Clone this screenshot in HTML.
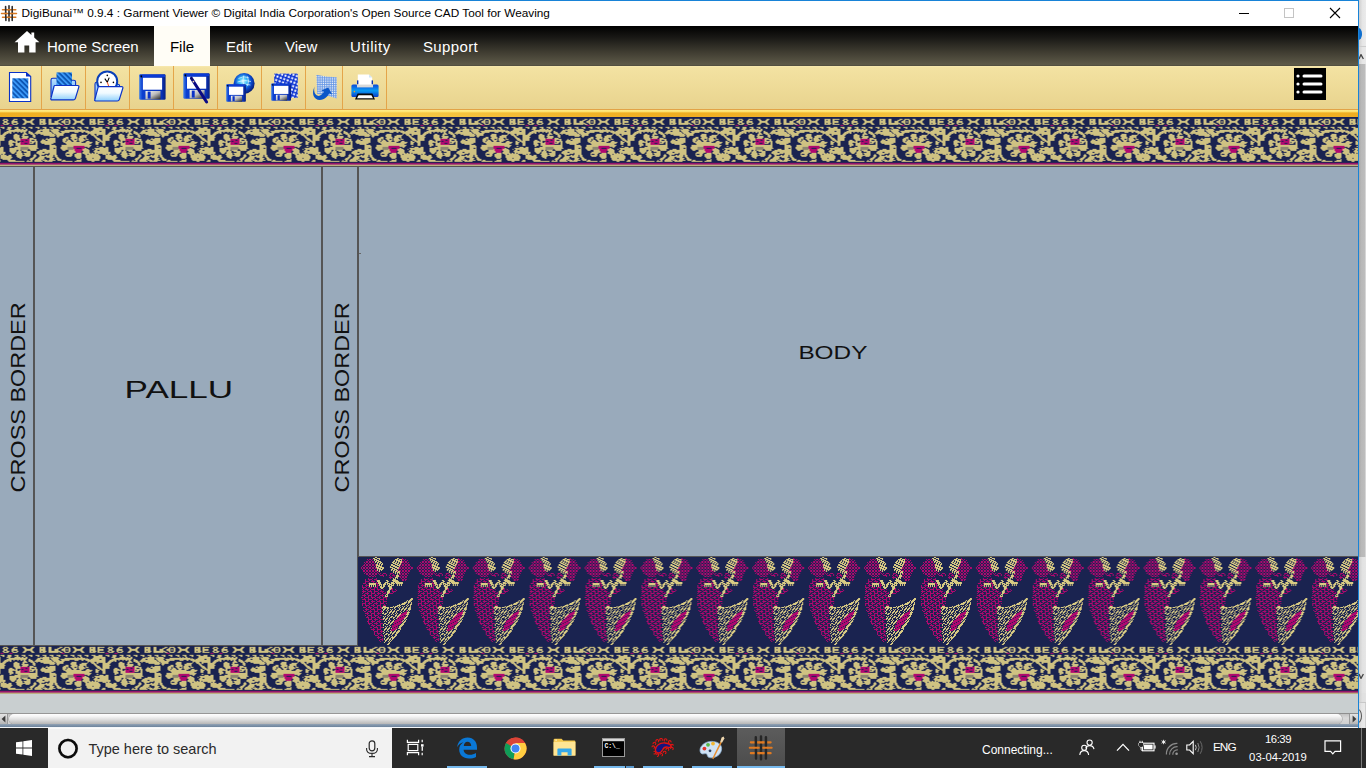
<!DOCTYPE html>
<html lang="en">
<head>
<meta charset="utf-8">
<title>DigiBunai Garment Viewer</title>
<style>
*{box-sizing:border-box;margin:0;padding:0}
html,body{width:1366px;height:768px;overflow:hidden;background:#e4e4e4;font-family:"Liberation Sans",sans-serif}
.abs{position:absolute}
#win{position:absolute;left:0;top:0;width:1358px;height:728px;background:#99aabb;overflow:hidden}
#title{position:absolute;left:0;top:0;width:1358px;height:26px;background:#fff;border-top:1px solid #1883d7}
#title .t{position:absolute;left:21.6px;top:5px;font-size:11.8px;line-height:15px;color:#000;white-space:nowrap;letter-spacing:0px}
#menu{position:absolute;left:0;top:26px;width:1358px;height:40px;background:linear-gradient(#000 0%,#1a1916 30%,#3f3c31 65%,#5d5948 96%,#4e4b3c 100%)}
#menu .mi{position:absolute;top:0;height:40px;line-height:42.6px;color:#fff;font-size:15px;white-space:nowrap}
#menu .sel{background:#fffdf6;color:#000}
#tool{position:absolute;left:0;top:66px;width:1358px;height:44px;background:linear-gradient(#f8e9b0 0%,#f3e2a2 4%,#eedb98 50%,#e8d38e 100%);border-bottom:1px solid #e2a347}
#tool .sep{position:absolute;top:0;width:1px;height:43px;background:#e4a54a}
#band{position:absolute;left:0;top:110px;width:1358px;height:7px;background:linear-gradient(rgba(255,238,140,0.95) 0%,rgba(255,232,120,0.85) 24%,rgba(255,225,110,0) 42%,rgba(255,225,110,0) 100%),linear-gradient(90deg,#efae22 0%,#f0b126 5%,#f9d252 25%,#f0b126 45%,#efae22 50%,#f0b126 55%,#f9d252 75%,#f0b126 95%,#efae22 100%)}
#topb{position:absolute;left:0;top:117px;width:1358px;height:49px}
#botb{position:absolute;left:0;top:645px;width:1358px;height:49px}
#main{position:absolute;left:0;top:166px;width:1358px;height:480px;background:#99aabb;border-top:1px solid #555}
.vl{position:absolute;top:0;width:2px;height:479px;background:#555}
#bodyb{position:absolute;left:358px;top:556px;width:1000px;height:89px}
#under{position:absolute;left:0;top:694px;width:1358px;height:19px;background:#c9cfd0}
#hscroll{position:absolute;left:0;top:713px;width:1358px;height:11px;background:linear-gradient(#c2c2c2,#d9d9d9 40%,#cfcfcf);border-top:1px solid #8f8f8f}
#hscroll .btn{position:absolute;top:0;width:8px;height:10px;background:linear-gradient(#e4e4e4,#d0d0d0 50%,#b4b4b4)}
#hscroll .thumb{position:absolute;left:9px;top:0;width:1333px;height:10px;border-radius:5px;background:linear-gradient(#ffffff 0%,#f4f4f4 25%,#dedede 55%,#b6b6b6 100%);box-shadow:0 0 0 0.6px #a0a0a0}
#wbot{position:absolute;left:0;top:724px;width:1358px;height:3px;background:linear-gradient(#93a3b4,#7a8fa6 60%,#6d849d)}
#wbot2{position:absolute;left:0;top:727px;width:1358px;height:1px;background:#f4f6f8}
#edge{position:absolute;left:1358px;top:0;width:1px;height:728px;background:#1883d7}
#strip{position:absolute;left:1359px;top:0;width:7px;height:728px;overflow:hidden;background:#e4e4e4}
#task{position:absolute;left:0;top:728px;width:1366px;height:40px;background:#292929}
#search{position:absolute;left:48px;top:0;width:344px;height:40px;background:#f2f2f2;border-top:1px solid #fafafa}
#search .st{position:absolute;left:40.4px;top:10px;font-size:14.5px;line-height:20px;color:#2b2b2b;white-space:nowrap}
#task .ul{position:absolute;top:38px;height:2px;background:#76b9ed}
#task .tt{position:absolute;color:#fff;line-height:15px;white-space:nowrap}
</style>
</head>
<body>
<svg width="0" height="0" style="position:absolute"><defs>
<filter id="blur" x="0" y="0" width="100%" height="100%"><feGaussianBlur stdDeviation="0.6"/></filter>
<pattern id="bp" width="105" height="49" patternUnits="userSpaceOnUse" patternTransform="translate(0.5 -0.15)">
<rect width="105" height="49" fill="#1a2350"/>
<path fill="#cfc282" d="M3 2h4v1h-4zM13 2h4v1h-4zM22 2h3v1h-3zM31 2h3v1h-3zM39 2h6v1h-6zM48 2h3v1h-3zM59 2h3v1h-3zM64 2h5v1h-5zM72 2h3v1h-3zM81 2h3v1h-3zM89 2h6v1h-6zM97 2h7v1h-7zM2 3h2v1h-2zM6 3h2v1h-2zM12 3h2v1h-2zM23 3h3v1h-3zM30 3h3v1h-3zM39 3h2v1h-2zM42 3h3v1h-3zM48 3h3v1h-3zM57 3h3v1h-3zM63 3h2v1h-2zM68 3h2v1h-2zM73 3h3v1h-3zM80 3h3v1h-3zM89 3h2v1h-2zM92 3h3v1h-3zM97 3h2v1h-2zM3 4h4v1h-4zM11 4h6v1h-6zM24 4h8v1h-8zM39 4h6v1h-6zM48 4h3v1h-3zM54 4h4v1h-4zM61 4h4v1h-4zM66 4h1v1h-1zM68 4h2v1h-2zM74 4h8v1h-8zM89 4h6v1h-6zM97 4h6v1h-6zM3 5h4v1h-4zM11 5h6v1h-6zM24 5h8v1h-8zM39 5h6v1h-6zM48 5h3v1h-3zM54 5h4v1h-4zM61 5h4v1h-4zM66 5h1v1h-1zM68 5h2v1h-2zM74 5h8v1h-8zM89 5h6v1h-6zM97 5h6v1h-6zM2 6h2v1h-2zM6 6h3v1h-3zM11 6h2v1h-2zM16 6h2v1h-2zM23 6h3v1h-3zM30 6h3v1h-3zM39 6h2v1h-2zM42 6h4v1h-4zM48 6h12v1h-12zM63 6h2v1h-2zM68 6h2v1h-2zM73 6h3v1h-3zM80 6h3v1h-3zM89 6h2v1h-2zM92 6h4v1h-4zM97 6h2v1h-2zM3 7h5v1h-5zM12 7h5v1h-5zM22 7h3v1h-3zM31 7h3v1h-3zM39 7h6v1h-6zM48 7h10v1h-10zM59 7h3v1h-3zM64 7h5v1h-5zM72 7h3v1h-3zM81 7h3v1h-3zM89 7h6v1h-6zM97 7h7v1h-7zM0 10h4v1h-4zM7 10h4v1h-4zM14 10h4v1h-4zM21 10h4v1h-4zM28 10h4v1h-4zM35 10h4v1h-4zM42 10h4v1h-4zM49 10h4v1h-4zM56 10h4v1h-4zM63 10h4v1h-4zM70 10h4v1h-4zM77 10h4v1h-4zM84 10h4v1h-4zM91 10h4v1h-4zM98 10h4v1h-4zM2 11h2v1h-2zM7 11h4v1h-4zM16 11h2v1h-2zM23 11h2v1h-2zM30 11h2v1h-2zM37 11h2v1h-2zM44 11h2v1h-2zM51 11h2v1h-2zM58 11h2v1h-2zM65 11h2v1h-2zM72 11h2v1h-2zM79 11h2v1h-2zM86 11h2v1h-2zM93 11h9v1h-9zM6 12h4v1h-4zM14 12h6v1h-6zM21 12h2v1h-2zM25 12h2v1h-2zM40 12h1v1h-1zM42 12h7v1h-7zM50 12h1v1h-1zM52 12h6v1h-6zM74 12h1v1h-1zM77 12h1v1h-1zM80 12h2v1h-2zM93 12h12v1h-12zM8 13h19v1h-19zM37 13h12v1h-12zM50 13h9v1h-9zM64 13h21v1h-21zM86 13h1v1h-1zM92 13h13v1h-13zM6 14h20v1h-20zM28 14h2v1h-2zM36 14h4v1h-4zM42 14h7v1h-7zM51 14h7v1h-7zM60 14h29v1h-29zM90 14h9v1h-9zM101 14h4v1h-4zM4 15h7v1h-7zM13 15h1v1h-1zM17 15h1v1h-1zM20 15h2v1h-2zM23 15h2v1h-2zM28 15h4v1h-4zM35 15h16v1h-16zM52 15h7v1h-7zM61 15h8v1h-8zM74 15h4v1h-4zM81 15h2v1h-2zM85 15h20v1h-20zM3 16h5v1h-5zM9 16h2v1h-2zM23 16h3v1h-3zM28 16h5v1h-5zM34 16h18v1h-18zM53 16h11v1h-11zM87 16h18v1h-18zM2 17h4v1h-4zM14 17h3v1h-3zM22 17h5v1h-5zM30 17h4v1h-4zM36 17h1v1h-1zM40 17h14v1h-14zM55 17h8v1h-8zM71 17h5v1h-5zM87 17h1v1h-1zM90 17h4v1h-4zM96 17h9v1h-9zM0 18h5v1h-5zM13 18h6v1h-6zM22 18h2v1h-2zM32 18h3v1h-3zM43 18h12v1h-12zM56 18h7v1h-7zM70 18h6v1h-6zM81 18h6v1h-6zM91 18h4v1h-4zM96 18h2v1h-2zM102 18h3v1h-3zM0 19h4v1h-4zM13 19h6v1h-6zM21 19h7v1h-7zM32 19h3v1h-3zM49 19h5v1h-5zM56 19h3v1h-3zM70 19h6v1h-6zM79 19h7v1h-7zM93 19h3v1h-3zM102 19h3v1h-3zM0 20h5v1h-5zM13 20h6v1h-6zM22 20h6v1h-6zM33 20h2v1h-2zM57 20h1v1h-1zM65 20h3v1h-3zM71 20h6v1h-6zM79 20h7v1h-7zM94 20h3v1h-3zM102 20h3v1h-3zM0 21h4v1h-4zM13 21h7v1h-7zM21 21h6v1h-6zM29 21h4v1h-4zM46 21h1v1h-1zM49 21h6v1h-6zM63 21h5v1h-5zM70 21h7v1h-7zM78 21h5v1h-5zM85 21h1v1h-1zM95 21h4v1h-4zM102 21h3v1h-3zM0 22h4v1h-4zM14 22h6v1h-6zM29 22h7v1h-7zM42 22h1v1h-1zM45 22h10v1h-10zM62 22h4v1h-4zM67 22h1v1h-1zM71 22h3v1h-3zM76 22h1v1h-1zM78 22h6v1h-6zM85 22h3v1h-3zM96 22h4v1h-4zM102 22h3v1h-3zM0 23h4v1h-4zM9 23h3v1h-3zM15 23h5v1h-5zM29 23h2v1h-2zM34 23h2v1h-2zM41 23h4v1h-4zM47 23h8v1h-8zM62 23h4v1h-4zM67 23h3v1h-3zM72 23h5v1h-5zM78 23h7v1h-7zM97 23h4v1h-4zM102 23h3v1h-3zM8 24h6v1h-6zM15 24h2v1h-2zM29 24h8v1h-8zM40 24h15v1h-15zM62 24h3v1h-3zM66 24h5v1h-5zM73 24h3v1h-3zM79 24h4v1h-4zM86 24h3v1h-3zM95 24h2v1h-2zM99 24h6v1h-6zM8 25h9v1h-9zM19 25h1v1h-1zM29 25h1v1h-1zM31 25h3v1h-3zM35 25h2v1h-2zM40 25h15v1h-15zM63 25h18v1h-18zM85 25h7v1h-7zM95 25h4v1h-4zM101 25h4v1h-4zM8 26h4v1h-4zM15 26h5v1h-5zM29 26h4v1h-4zM35 26h2v1h-2zM41 26h12v1h-12zM65 26h26v1h-26zM95 26h3v1h-3zM102 26h3v1h-3zM8 27h5v1h-5zM15 27h5v1h-5zM35 27h2v1h-2zM44 27h7v1h-7zM66 27h23v1h-23zM95 27h3v1h-3zM102 27h3v1h-3zM9 28h4v1h-4zM15 28h22v1h-22zM49 28h6v1h-6zM61 28h30v1h-30zM102 28h3v1h-3zM9 29h2v1h-2zM17 29h20v1h-20zM49 29h7v1h-7zM61 29h12v1h-12zM84 29h6v1h-6zM96 29h2v1h-2zM0 30h3v1h-3zM14 30h6v1h-6zM28 30h9v1h-9zM49 30h7v1h-7zM60 30h7v1h-7zM87 30h2v1h-2zM99 30h4v1h-4zM0 31h3v1h-3zM9 31h11v1h-11zM28 31h10v1h-10zM49 31h4v1h-4zM55 31h1v1h-1zM60 31h7v1h-7zM84 31h2v1h-2zM94 31h11v1h-11zM0 32h3v1h-3zM9 32h11v1h-11zM29 32h7v1h-7zM42 32h4v1h-4zM49 32h7v1h-7zM61 32h6v1h-6zM73 32h1v1h-1zM82 32h6v1h-6zM92 32h1v1h-1zM95 32h10v1h-10zM0 33h3v1h-3zM9 33h7v1h-7zM18 33h2v1h-2zM21 33h6v1h-6zM30 33h6v1h-6zM39 33h17v1h-17zM62 33h3v1h-3zM68 33h6v1h-6zM82 33h7v1h-7zM94 33h3v1h-3zM99 33h6v1h-6zM0 34h3v1h-3zM9 34h7v1h-7zM17 34h4v1h-4zM23 34h7v1h-7zM37 34h19v1h-19zM68 34h7v1h-7zM83 34h6v1h-6zM93 34h12v1h-12zM0 35h5v1h-5zM10 35h5v1h-5zM16 35h5v1h-5zM26 35h4v1h-4zM36 35h6v1h-6zM44 35h12v1h-12zM66 35h9v1h-9zM82 35h7v1h-7zM94 35h11v1h-11zM0 36h5v1h-5zM11 36h3v1h-3zM16 36h6v1h-6zM23 36h7v1h-7zM36 36h12v1h-12zM49 36h7v1h-7zM65 36h8v1h-8zM76 36h5v1h-5zM82 36h8v1h-8zM91 36h2v1h-2zM94 36h2v1h-2zM97 36h8v1h-8zM0 37h1v1h-1zM2 37h2v1h-2zM15 37h7v1h-7zM24 37h6v1h-6zM34 37h1v1h-1zM38 37h6v1h-6zM49 37h7v1h-7zM65 37h1v1h-1zM69 37h3v1h-3zM74 37h7v1h-7zM84 37h3v1h-3zM88 37h10v1h-10zM102 37h3v1h-3zM0 38h6v1h-6zM8 38h3v1h-3zM16 38h14v1h-14zM33 38h3v1h-3zM39 38h2v1h-2zM45 38h2v1h-2zM48 38h5v1h-5zM54 38h3v1h-3zM65 38h7v1h-7zM74 38h7v1h-7zM85 38h14v1h-14zM0 39h11v1h-11zM16 39h6v1h-6zM25 39h4v1h-4zM33 39h3v1h-3zM39 39h14v1h-14zM54 39h3v1h-3zM66 39h5v1h-5zM74 39h7v1h-7zM85 39h15v1h-15zM0 40h12v1h-12zM17 40h4v1h-4zM32 40h3v1h-3zM38 40h6v1h-6zM46 40h6v1h-6zM55 40h3v1h-3zM75 40h6v1h-6zM85 40h15v1h-15zM0 41h11v1h-11zM19 41h2v1h-2zM30 41h4v1h-4zM37 41h7v1h-7zM49 41h5v1h-5zM56 41h3v1h-3zM76 41h4v1h-4zM86 41h6v1h-6zM93 41h7v1h-7zM2 42h8v1h-8zM29 42h4v1h-4zM35 42h8v1h-8zM44 42h1v1h-1zM49 42h4v1h-4zM56 42h5v1h-5zM80 42h1v1h-1zM86 42h13v1h-13zM7 43h8v1h-8zM27 43h1v1h-1zM30 43h2v1h-2zM34 43h7v1h-7zM42 43h5v1h-5zM48 43h7v1h-7zM57 43h4v1h-4zM62 43h3v1h-3zM76 43h5v1h-5zM87 43h12v1h-12zM102 43h3v1h-3zM8 44h16v1h-16zM26 44h6v1h-6zM34 44h8v1h-8zM44 44h8v1h-8zM61 44h11v1h-11zM74 44h7v1h-7zM91 44h3v1h-3zM101 44h4v1h-4z"/>
<path fill="#b0086f" d="M0 8h3v1h-3zM9 8h3v1h-3zM61 8h3v1h-3zM20 22h9v1h-9zM20 23h5v1h-5zM27 23h2v1h-2zM20 24h1v1h-1zM23 24h6v1h-6zM20 25h9v1h-9zM20 26h4v1h-4zM27 26h2v1h-2zM20 27h9v1h-9zM73 29h11v1h-11zM73 30h11v1h-11zM73 31h3v1h-3zM81 31h3v1h-3zM74 32h8v1h-8zM74 33h8v1h-8zM75 34h6v1h-6zM75 35h6v1h-6z"/>
<path fill="#8c8770" d="M20 30h8v1h-8zM67 30h6v1h-6zM20 31h8v1h-8zM67 31h6v1h-6zM20 32h8v1h-8zM67 32h6v1h-6z"/>
<rect x="-1" y="46.2" width="107" height="1.55" fill="#b0086f"/><rect x="-1" y="47.75" width="107" height="1.4" fill="#d9c98a"/>
</pattern>

<pattern id="pp" width="56" height="88" patternUnits="userSpaceOnUse" patternTransform="translate(1 0) scale(0.99821 1)">
<rect width="56" height="88" fill="#1a2350"/>
<path fill="#d9cb83" d="M16 0h2v1h-2zM14 1h2v1h-2zM18 1h3v1h-3zM38 1h2v1h-2zM15 2h3v1h-3zM20 2h1v1h-1zM36 2h3v1h-3zM40 2h3v1h-3zM15 3h1v1h-1zM17 3h3v1h-3zM35 3h1v1h-1zM37 3h4v1h-4zM42 3h1v1h-1zM16 4h2v1h-2zM19 4h3v1h-3zM34 4h2v1h-2zM37 4h1v1h-1zM39 4h4v1h-4zM16 5h1v1h-1zM18 5h2v1h-2zM21 5h2v1h-2zM33 5h2v1h-2zM36 5h2v1h-2zM39 5h1v1h-1zM41 5h2v1h-2zM18 6h1v1h-1zM20 6h2v1h-2zM23 6h1v1h-1zM34 6h3v1h-3zM38 6h2v1h-2zM41 6h1v1h-1zM17 7h2v1h-2zM20 7h1v1h-1zM22 7h2v1h-2zM32 7h2v1h-2zM36 7h3v1h-3zM40 7h2v1h-2zM17 8h4v1h-4zM22 8h1v1h-1zM32 8h4v1h-4zM38 8h3v1h-3zM17 9h1v1h-1zM19 9h4v1h-4zM31 9h1v1h-1zM34 9h4v1h-4zM40 9h1v1h-1zM17 10h3v1h-3zM21 10h4v1h-4zM31 10h3v1h-3zM36 10h4v1h-4zM18 11h4v1h-4zM23 11h2v1h-2zM33 11h3v1h-3zM38 11h2v1h-2zM18 12h1v1h-1zM20 12h4v1h-4zM32 12h2v1h-2zM35 12h3v1h-3zM18 13h1v1h-1zM20 13h1v1h-1zM22 13h1v1h-1zM32 13h1v1h-1zM34 13h2v1h-2zM37 13h2v1h-2zM20 14h1v1h-1zM34 14h1v1h-1zM36 14h2v1h-2zM39 14h2v1h-2zM34 15h1v1h-1zM36 15h1v1h-1zM38 15h3v1h-3zM36 16h1v1h-1zM38 16h1v1h-1zM40 16h1v1h-1zM38 17h1v1h-1zM37 18h3v1h-3zM37 19h3v1h-3zM36 20h3v1h-3zM34 21h1v1h-1zM36 21h1v1h-1zM38 21h1v1h-1zM34 22h3v1h-3zM18 23h3v1h-3zM27 23h2v1h-2zM33 23h6v1h-6zM18 24h3v1h-3zM28 24h2v1h-2zM34 24h6v1h-6zM19 25h3v1h-3zM26 25h3v1h-3zM32 25h3v1h-3zM36 25h8v1h-8zM10 26h7v1h-7zM19 26h3v1h-3zM25 26h2v1h-2zM28 26h3v1h-3zM32 26h4v1h-4zM37 26h7v1h-7zM10 27h7v1h-7zM20 27h3v1h-3zM24 27h3v1h-3zM28 27h1v1h-1zM30 27h3v1h-3zM34 27h1v1h-1zM38 27h1v1h-1zM40 27h1v1h-1zM42 27h1v1h-1zM10 28h1v1h-1zM12 28h1v1h-1zM14 28h1v1h-1zM16 28h1v1h-1zM20 28h1v1h-1zM22 28h1v1h-1zM24 28h2v1h-2zM29 28h2v1h-2zM32 28h3v1h-3zM38 28h1v1h-1zM40 28h1v1h-1zM42 28h1v1h-1zM10 29h1v1h-1zM12 29h1v1h-1zM14 29h1v1h-1zM16 29h1v1h-1zM21 29h2v1h-2zM24 29h2v1h-2zM29 29h4v1h-4zM21 30h4v1h-4zM30 30h3v1h-3zM22 31h2v1h-2zM30 31h3v1h-3zM30 32h2v1h-2zM29 33h2v1h-2zM28 34h3v1h-3zM28 35h3v1h-3zM28 36h2v1h-2zM27 37h2v1h-2zM26 38h1v1h-1zM28 38h1v1h-1zM26 39h3v1h-3zM52 41h2v1h-2zM51 42h3v1h-3zM48 43h1v1h-1zM50 43h3v1h-3zM47 44h1v1h-1zM49 44h3v1h-3zM45 45h3v1h-3zM49 45h2v1h-2zM52 45h1v1h-1zM43 46h4v1h-4zM49 46h1v1h-1zM52 46h1v1h-1zM40 47h1v1h-1zM42 47h4v1h-4zM48 47h1v1h-1zM51 47h2v1h-2zM38 48h4v1h-4zM47 48h1v1h-1zM49 48h1v1h-1zM51 48h1v1h-1zM24 49h3v1h-3zM34 49h1v1h-1zM36 49h3v1h-3zM40 49h1v1h-1zM43 49h1v1h-1zM45 49h1v1h-1zM48 49h1v1h-1zM51 49h1v1h-1zM23 50h7v1h-7zM31 50h3v1h-3zM35 50h2v1h-2zM39 50h1v1h-1zM41 50h1v1h-1zM44 50h1v1h-1zM47 50h1v1h-1zM50 50h2v1h-2zM23 51h1v1h-1zM25 51h2v1h-2zM28 51h2v1h-2zM35 51h1v1h-1zM40 51h1v1h-1zM43 51h2v1h-2zM46 51h2v1h-2zM49 51h3v1h-3zM24 52h2v1h-2zM28 52h1v1h-1zM31 52h1v1h-1zM33 52h1v1h-1zM36 52h1v1h-1zM40 52h1v1h-1zM42 52h2v1h-2zM45 52h2v1h-2zM49 52h3v1h-3zM24 53h1v1h-1zM27 53h1v1h-1zM29 53h1v1h-1zM32 53h1v1h-1zM35 53h1v1h-1zM38 53h2v1h-2zM42 53h1v1h-1zM45 53h1v1h-1zM48 53h1v1h-1zM50 53h1v1h-1zM23 54h1v1h-1zM28 54h1v1h-1zM31 54h2v1h-2zM34 54h2v1h-2zM37 54h1v1h-1zM41 54h1v1h-1zM44 54h1v1h-1zM49 54h1v1h-1zM24 55h1v1h-1zM28 55h1v1h-1zM30 55h2v1h-2zM33 55h2v1h-2zM37 55h1v1h-1zM42 55h1v1h-1zM48 55h3v1h-3zM23 56h2v1h-2zM26 56h2v1h-2zM30 56h1v1h-1zM33 56h1v1h-1zM36 56h1v1h-1zM38 56h1v1h-1zM41 56h1v1h-1zM48 56h2v1h-2zM25 57h2v1h-2zM29 57h1v1h-1zM32 57h1v1h-1zM34 57h1v1h-1zM37 57h1v1h-1zM40 57h2v1h-2zM47 57h3v1h-3zM28 58h1v1h-1zM30 58h1v1h-1zM36 58h2v1h-2zM39 58h2v1h-2zM48 58h1v1h-1zM24 59h1v1h-1zM26 59h1v1h-1zM29 59h1v1h-1zM32 59h2v1h-2zM36 59h1v1h-1zM38 59h2v1h-2zM47 59h2v1h-2zM25 60h1v1h-1zM28 60h1v1h-1zM31 60h2v1h-2zM34 60h2v1h-2zM38 60h1v1h-1zM46 60h2v1h-2zM24 61h2v1h-2zM27 61h2v1h-2zM30 61h1v1h-1zM34 61h1v1h-1zM37 61h1v1h-1zM45 61h2v1h-2zM24 62h1v1h-1zM26 62h2v1h-2zM30 62h1v1h-1zM35 62h1v1h-1zM45 62h1v1h-1zM47 62h1v1h-1zM26 63h1v1h-1zM29 63h1v1h-1zM31 63h1v1h-1zM34 63h1v1h-1zM44 63h1v1h-1zM46 63h1v1h-1zM25 64h1v1h-1zM27 64h1v1h-1zM30 64h1v1h-1zM33 64h2v1h-2zM43 64h1v1h-1zM45 64h2v1h-2zM29 65h2v1h-2zM32 65h2v1h-2zM44 65h2v1h-2zM25 66h2v1h-2zM29 66h1v1h-1zM31 66h2v1h-2zM43 66h2v1h-2zM24 67h1v1h-1zM27 67h2v1h-2zM31 67h1v1h-1zM42 67h3v1h-3zM24 68h1v1h-1zM30 68h1v1h-1zM41 68h3v1h-3zM26 69h1v1h-1zM28 69h1v1h-1zM31 69h1v1h-1zM40 69h3v1h-3zM24 70h1v1h-1zM27 70h1v1h-1zM30 70h1v1h-1zM40 70h2v1h-2zM26 71h2v1h-2zM29 71h2v1h-2zM32 71h1v1h-1zM39 71h3v1h-3zM25 72h2v1h-2zM28 72h2v1h-2zM37 72h1v1h-1zM41 72h1v1h-1zM25 73h1v1h-1zM28 73h1v1h-1zM31 73h1v1h-1zM36 73h1v1h-1zM39 73h2v1h-2zM24 74h1v1h-1zM27 74h1v1h-1zM29 74h1v1h-1zM32 74h1v1h-1zM35 74h2v1h-2zM38 74h3v1h-3zM25 75h1v1h-1zM31 75h2v1h-2zM34 75h2v1h-2zM37 75h3v1h-3zM24 76h1v1h-1zM27 76h2v1h-2zM31 76h1v1h-1zM33 76h2v1h-2zM37 76h2v1h-2zM26 77h2v1h-2zM29 77h2v1h-2zM33 77h1v1h-1zM36 77h2v1h-2zM25 78h1v1h-1zM29 78h1v1h-1zM32 78h1v1h-1zM36 78h2v1h-2zM25 79h1v1h-1zM30 79h1v1h-1zM33 79h1v1h-1zM35 79h2v1h-2zM26 80h1v1h-1zM29 80h1v1h-1zM32 80h4v1h-4zM25 81h1v1h-1zM28 81h2v1h-2zM31 81h1v1h-1zM33 81h2v1h-2zM25 82h1v1h-1zM27 82h2v1h-2zM30 82h2v1h-2zM33 82h1v1h-1zM26 83h2v1h-2zM30 83h1v1h-1zM32 83h1v1h-1zM26 84h1v1h-1zM29 84h1v1h-1zM31 84h1v1h-1zM25 85h1v1h-1zM30 85h1v1h-1zM29 86h2v1h-2zM28 87h2v1h-2z"/>
<path fill="#b0086f" d="M43 1h1v1h-1zM8 2h1v1h-1zM10 2h2v1h-2zM13 2h1v1h-1zM43 2h2v1h-2zM46 2h1v1h-1zM9 3h1v1h-1zM12 3h1v1h-1zM45 3h1v1h-1zM48 3h1v1h-1zM7 4h2v1h-2zM10 4h2v1h-2zM13 4h2v1h-2zM43 4h2v1h-2zM46 4h2v1h-2zM5 5h1v1h-1zM7 5h2v1h-2zM10 5h2v1h-2zM13 5h2v1h-2zM43 5h2v1h-2zM46 5h2v1h-2zM49 5h1v1h-1zM6 6h1v1h-1zM9 6h1v1h-1zM12 6h1v1h-1zM15 6h1v1h-1zM42 6h1v1h-1zM45 6h1v1h-1zM48 6h1v1h-1zM5 7h1v1h-1zM7 7h2v1h-2zM10 7h2v1h-2zM13 7h2v1h-2zM16 7h1v1h-1zM43 7h2v1h-2zM46 7h2v1h-2zM49 7h2v1h-2zM4 8h2v1h-2zM7 8h2v1h-2zM10 8h2v1h-2zM13 8h2v1h-2zM16 8h1v1h-1zM41 8h1v1h-1zM43 8h2v1h-2zM46 8h2v1h-2zM49 8h2v1h-2zM3 9h1v1h-1zM6 9h1v1h-1zM9 9h1v1h-1zM12 9h1v1h-1zM15 9h1v1h-1zM42 9h1v1h-1zM45 9h1v1h-1zM48 9h1v1h-1zM51 9h1v1h-1zM2 10h1v1h-1zM4 10h2v1h-2zM7 10h2v1h-2zM10 10h2v1h-2zM13 10h2v1h-2zM16 10h1v1h-1zM40 10h2v1h-2zM43 10h2v1h-2zM46 10h2v1h-2zM49 10h2v1h-2zM52 10h2v1h-2zM2 11h1v1h-1zM4 11h2v1h-2zM7 11h2v1h-2zM10 11h2v1h-2zM13 11h2v1h-2zM16 11h2v1h-2zM40 11h2v1h-2zM43 11h2v1h-2zM46 11h2v1h-2zM49 11h2v1h-2zM52 11h2v1h-2zM3 12h1v1h-1zM6 12h1v1h-1zM9 12h1v1h-1zM12 12h1v1h-1zM15 12h1v1h-1zM39 12h1v1h-1zM42 12h1v1h-1zM45 12h1v1h-1zM48 12h1v1h-1zM51 12h1v1h-1zM4 13h2v1h-2zM7 13h2v1h-2zM10 13h2v1h-2zM13 13h2v1h-2zM16 13h2v1h-2zM40 13h2v1h-2zM43 13h2v1h-2zM46 13h2v1h-2zM49 13h2v1h-2zM4 14h2v1h-2zM7 14h2v1h-2zM10 14h2v1h-2zM13 14h2v1h-2zM16 14h2v1h-2zM19 14h1v1h-1zM38 14h1v1h-1zM41 14h1v1h-1zM43 14h2v1h-2zM46 14h2v1h-2zM49 14h2v1h-2zM6 15h1v1h-1zM9 15h1v1h-1zM12 15h1v1h-1zM15 15h1v1h-1zM18 15h1v1h-1zM42 15h1v1h-1zM45 15h1v1h-1zM48 15h1v1h-1zM5 16h1v1h-1zM7 16h2v1h-2zM10 16h2v1h-2zM13 16h2v1h-2zM16 16h2v1h-2zM19 16h1v1h-1zM21 16h1v1h-1zM24 16h3v1h-3zM31 16h3v1h-3zM41 16h1v1h-1zM43 16h2v1h-2zM46 16h2v1h-2zM49 16h1v1h-1zM7 17h2v1h-2zM10 17h2v1h-2zM13 17h2v1h-2zM16 17h2v1h-2zM20 17h1v1h-1zM23 17h1v1h-1zM27 17h1v1h-1zM31 17h1v1h-1zM34 17h1v1h-1zM40 17h2v1h-2zM43 17h2v1h-2zM46 17h2v1h-2zM9 18h1v1h-1zM12 18h1v1h-1zM15 18h1v1h-1zM21 18h4v1h-4zM27 18h1v1h-1zM30 18h1v1h-1zM33 18h3v1h-3zM42 18h1v1h-1zM45 18h1v1h-1zM48 18h1v1h-1zM10 19h2v1h-2zM13 19h2v1h-2zM16 19h1v1h-1zM24 19h1v1h-1zM31 19h1v1h-1zM35 19h1v1h-1zM40 19h2v1h-2zM43 19h2v1h-2zM46 19h2v1h-2zM30 20h4v1h-4zM41 20h1v1h-1zM43 20h2v1h-2zM46 20h2v1h-2zM9 21h1v1h-1zM13 21h1v1h-1zM17 21h1v1h-1zM31 21h1v1h-1zM42 21h1v1h-1zM45 21h1v1h-1zM6 22h1v1h-1zM9 22h4v1h-4zM15 22h3v1h-3zM43 22h2v1h-2zM46 22h2v1h-2zM6 23h1v1h-1zM10 23h1v1h-1zM13 23h1v1h-1zM17 23h1v1h-1zM43 23h2v1h-2zM46 23h1v1h-1zM6 24h4v1h-4zM12 24h4v1h-4zM6 25h1v1h-1zM10 25h1v1h-1zM14 25h1v1h-1zM17 25h1v1h-1zM4 26h3v1h-3zM9 26h1v1h-1zM17 26h2v1h-2zM7 27h1v1h-1zM18 27h1v1h-1zM3 28h1v1h-1zM6 28h4v1h-4zM18 28h2v1h-2zM3 29h1v1h-1zM7 29h1v1h-1zM18 29h1v1h-1zM3 30h4v1h-4zM9 30h4v1h-4zM15 30h4v1h-4zM4 31h1v1h-1zM7 31h1v1h-1zM11 31h1v1h-1zM15 31h1v1h-1zM18 31h1v1h-1zM33 31h1v1h-1zM3 32h1v1h-1zM6 32h4v1h-4zM12 32h4v1h-4zM18 32h4v1h-4zM24 32h1v1h-1zM32 32h2v1h-2zM36 32h1v1h-1zM4 33h1v1h-1zM8 33h1v1h-1zM11 33h1v1h-1zM15 33h1v1h-1zM19 33h1v1h-1zM22 33h1v1h-1zM33 33h1v1h-1zM37 33h1v1h-1zM3 34h4v1h-4zM9 34h4v1h-4zM15 34h4v1h-4zM21 34h4v1h-4zM33 34h4v1h-4zM4 35h1v1h-1zM8 35h1v1h-1zM12 35h1v1h-1zM15 35h1v1h-1zM19 35h1v1h-1zM23 35h1v1h-1zM26 35h1v1h-1zM34 35h1v1h-1zM3 36h1v1h-1zM6 36h4v1h-4zM12 36h4v1h-4zM18 36h4v1h-4zM24 36h3v1h-3zM30 36h4v1h-4zM5 37h1v1h-1zM8 37h1v1h-1zM12 37h1v1h-1zM16 37h1v1h-1zM19 37h1v1h-1zM23 37h1v1h-1zM3 38h4v1h-4zM9 38h4v1h-4zM15 38h4v1h-4zM21 38h4v1h-4zM5 39h1v1h-1zM9 39h1v1h-1zM12 39h1v1h-1zM16 39h1v1h-1zM20 39h1v1h-1zM23 39h1v1h-1zM2 40h2v1h-2zM6 40h4v1h-4zM12 40h4v1h-4zM18 40h4v1h-4zM24 40h4v1h-4zM5 41h1v1h-1zM9 41h1v1h-1zM13 41h1v1h-1zM16 41h1v1h-1zM20 41h1v1h-1zM24 41h1v1h-1zM27 41h1v1h-1zM3 42h4v1h-4zM9 42h4v1h-4zM15 42h4v1h-4zM21 42h4v1h-4zM27 42h1v1h-1zM6 43h1v1h-1zM9 43h1v1h-1zM13 43h1v1h-1zM17 43h1v1h-1zM20 43h1v1h-1zM24 43h1v1h-1zM3 44h1v1h-1zM6 44h4v1h-4zM12 44h4v1h-4zM18 44h4v1h-4zM24 44h4v1h-4zM6 45h1v1h-1zM10 45h1v1h-1zM13 45h1v1h-1zM17 45h1v1h-1zM21 45h1v1h-1zM24 45h1v1h-1zM3 46h4v1h-4zM9 46h4v1h-4zM15 46h4v1h-4zM21 46h4v1h-4zM27 46h1v1h-1zM3 47h1v1h-1zM6 47h1v1h-1zM10 47h1v1h-1zM14 47h1v1h-1zM17 47h1v1h-1zM21 47h1v1h-1zM25 47h1v1h-1zM3 48h1v1h-1zM6 48h4v1h-4zM12 48h4v1h-4zM18 48h4v1h-4zM24 48h3v1h-3zM7 49h1v1h-1zM10 49h1v1h-1zM14 49h1v1h-1zM18 49h1v1h-1zM21 49h1v1h-1zM4 50h3v1h-3zM9 50h4v1h-4zM15 50h4v1h-4zM21 50h2v1h-2zM7 51h1v1h-1zM11 51h1v1h-1zM14 51h1v1h-1zM18 51h1v1h-1zM22 51h1v1h-1zM6 52h4v1h-4zM12 52h4v1h-4zM18 52h4v1h-4zM4 53h1v1h-1zM7 53h1v1h-1zM11 53h1v1h-1zM15 53h1v1h-1zM18 53h1v1h-1zM22 53h1v1h-1zM47 53h1v1h-1zM5 54h2v1h-2zM9 54h4v1h-4zM15 54h4v1h-4zM21 54h2v1h-2zM47 54h1v1h-1zM8 55h1v1h-1zM11 55h1v1h-1zM15 55h1v1h-1zM19 55h1v1h-1zM22 55h1v1h-1zM45 55h3v1h-3zM6 56h4v1h-4zM12 56h4v1h-4zM18 56h4v1h-4zM43 56h5v1h-5zM8 57h1v1h-1zM12 57h1v1h-1zM15 57h1v1h-1zM19 57h1v1h-1zM42 57h5v1h-5zM6 58h1v1h-1zM9 58h4v1h-4zM15 58h4v1h-4zM21 58h2v1h-2zM41 58h4v1h-4zM46 58h1v1h-1zM8 59h1v1h-1zM12 59h1v1h-1zM16 59h1v1h-1zM19 59h1v1h-1zM40 59h3v1h-3zM44 59h2v1h-2zM7 60h3v1h-3zM12 60h4v1h-4zM18 60h4v1h-4zM39 60h2v1h-2zM42 60h4v1h-4zM9 61h1v1h-1zM12 61h1v1h-1zM16 61h1v1h-1zM20 61h1v1h-1zM38 61h1v1h-1zM40 61h5v1h-5zM9 62h4v1h-4zM15 62h4v1h-4zM21 62h3v1h-3zM38 62h6v1h-6zM9 63h1v1h-1zM13 63h1v1h-1zM16 63h1v1h-1zM20 63h1v1h-1zM36 63h6v1h-6zM43 63h1v1h-1zM8 64h2v1h-2zM12 64h4v1h-4zM18 64h4v1h-4zM35 64h5v1h-5zM41 64h2v1h-2zM9 65h1v1h-1zM13 65h1v1h-1zM17 65h1v1h-1zM20 65h1v1h-1zM35 65h3v1h-3zM39 65h4v1h-4zM9 66h4v1h-4zM15 66h4v1h-4zM21 66h3v1h-3zM34 66h2v1h-2zM37 66h5v1h-5zM10 67h1v1h-1zM13 67h1v1h-1zM17 67h1v1h-1zM21 67h1v1h-1zM35 67h6v1h-6zM12 68h4v1h-4zM18 68h4v1h-4zM33 68h6v1h-6zM14 69h1v1h-1zM17 69h1v1h-1zM21 69h1v1h-1zM33 69h4v1h-4zM38 69h1v1h-1zM11 70h2v1h-2zM15 70h4v1h-4zM21 70h3v1h-3zM33 70h2v1h-2zM36 70h3v1h-3zM14 71h1v1h-1zM18 71h1v1h-1zM21 71h1v1h-1zM34 71h4v1h-4zM12 72h4v1h-4zM18 72h4v1h-4zM32 72h5v1h-5zM14 73h1v1h-1zM18 73h1v1h-1zM22 73h1v1h-1zM32 73h3v1h-3zM15 74h4v1h-4zM21 74h3v1h-3zM15 75h1v1h-1zM18 75h1v1h-1zM22 75h1v1h-1zM15 76h1v1h-1zM18 76h4v1h-4zM15 77h1v1h-1zM19 77h1v1h-1zM22 77h1v1h-1zM16 78h3v1h-3zM21 78h3v1h-3zM19 79h1v1h-1zM23 79h1v1h-1zM18 80h4v1h-4zM19 81h1v1h-1zM23 81h1v1h-1zM21 82h3v1h-3zM20 83h1v1h-1zM23 83h1v1h-1zM21 84h1v1h-1z"/>
</pattern>
</defs></svg>
<div id="win">
  <div id="title">
<svg class="abs" style="left:0;top:3px" width="20" height="20" viewBox="0 0 20 20">
<g stroke="#d97a22" stroke-width="1.5" stroke-linecap="round"><path d="M2.5 5.8H15.8M1.5 9.5H16.5M2.5 13.2H15.8"/></g>
<g stroke="#2e2e2e" stroke-width="1.6" stroke-linecap="round"><path d="M5.6 2.5L5.9 16.5M9 1.8L9 17M12.2 2.5L12.2 16.5"/></g>
<g stroke="#d97a22" stroke-width="1.5"><path d="M7.6 5.8h2.8M4.2 9.5h2.8M10.8 9.5h2.8M7.6 13.2h2.8"/></g>
</svg>
<svg class="abs" style="left:1230px;top:0" width="128" height="25" viewBox="0 0 128 25">
<path d="M9 12.5H19" stroke="#000" stroke-width="1"/>
<rect x="54.5" y="7.5" width="9" height="9" fill="none" stroke="#c4c4c4" stroke-width="1"/>
<path d="M100 7L110 17M110 7L100 17" stroke="#000" stroke-width="1.1"/>
</svg>
<span class="t">DigiBunai™ 0.9.4 : Garment Viewer © Digital India Corporation's Open Source CAD Tool for Weaving</span></div>
  <div id="menu">
    <svg class="abs" style="left:14px;top:4px" width="26" height="24" viewBox="0 0 26 24"><path d="M13 1L0.6 12.2H4V22.6H10.4V15.4H15.2V22.6H21.6V12.2H25.4L20.2 7.4V2.6H17.4V4.9Z" fill="#fff"/></svg>
    <span class="mi" style="left:47px">Home Screen</span>
    <span class="mi sel" style="left:154px;width:56px;text-align:center">File</span>
    <span class="mi" style="left:226px">Edit</span>
    <span class="mi" style="left:285px">View</span>
    <span class="mi" style="left:350px;letter-spacing:0.6px">Utility</span>
    <span class="mi" style="left:423px;letter-spacing:0.36px">Support</span>
  </div>
  <div id="tool">
<div class="sep" style="left:41px"></div><div class="sep" style="left:85px"></div><div class="sep" style="left:129px"></div><div class="sep" style="left:173px"></div><div class="sep" style="left:217px"></div><div class="sep" style="left:261px"></div><div class="sep" style="left:305px"></div><div class="sep" style="left:342px"></div><div class="sep" style="left:386px"></div>
<svg class="abs" style="left:0;top:0" width="400" height="44" viewBox="0 0 400 44">
<defs>
<pattern id="fab" width="3.6" height="3.6" patternUnits="userSpaceOnUse" patternTransform="rotate(-45)"><rect width="3.6" height="3.6" fill="#3b98f6"/><rect width="1.8" height="3.6" fill="#0d56b4"/></pattern>
<pattern id="chk" width="3.6" height="3.6" patternUnits="userSpaceOnUse" patternTransform="rotate(20)"><rect width="3.6" height="3.6" fill="#0a32d2"/><rect x="0.5" y="0.5" width="2.1" height="2" fill="#fff"/></pattern>
<pattern id="grd" width="1.8" height="1.8" patternUnits="userSpaceOnUse"><rect width="1.8" height="1.8" fill="#fff"/><path d="M0 0.45H1.8M0.45 0V1.8" stroke="#5a90ec" stroke-width="0.8"/></pattern>
<linearGradient id="fl" x1="0" x2="1" y1="0" y2="0"><stop offset="0" stop-color="#3f7fe6"/><stop offset="0.12" stop-color="#0c3fd0"/><stop offset="0.85" stop-color="#0a32b8"/><stop offset="1" stop-color="#08207e"/></linearGradient>
<linearGradient id="sh" x1="0" x2="1" y1="0" y2="1"><stop offset="0" stop-color="#f4f4f4"/><stop offset="0.5" stop-color="#bdbdbd"/><stop offset="1" stop-color="#2a2a2a"/></linearGradient>
<linearGradient id="fo" x1="0" x2="0" y1="0" y2="1"><stop offset="0" stop-color="#ffffff"/><stop offset="0.45" stop-color="#f0faff"/><stop offset="1" stop-color="#8fd0fb"/></linearGradient>
<linearGradient id="fb" x1="0" x2="0" y1="0" y2="1"><stop offset="0" stop-color="#b9e0ff"/><stop offset="1" stop-color="#5aa8f0"/></linearGradient>
<radialGradient id="gl" cx="0.45" cy="0.4" r="0.6"><stop offset="0" stop-color="#d8f8ff"/><stop offset="0.3" stop-color="#3cc0f8"/><stop offset="0.65" stop-color="#0a4bd0"/><stop offset="1" stop-color="#061a70"/></radialGradient>
<linearGradient id="pr" x1="0" x2="0" y1="0" y2="1"><stop offset="0" stop-color="#0a46d8"/><stop offset="0.5" stop-color="#0a9cf4"/><stop offset="1" stop-color="#0a3cc8"/></linearGradient>
<g id="floppy">
<rect x="0" y="0" width="26.4" height="25.6" rx="1.2" fill="url(#fl)"/>
<rect x="0.6" y="0.5" width="25.2" height="2.4" fill="#0a3ad4"/>
<rect x="3.7" y="3.6" width="19.2" height="11.9" fill="#fff"/>
<rect x="1.4" y="1.2" width="1.5" height="2" fill="#000"/>
<rect x="6.3" y="16.8" width="15" height="8.3" fill="url(#sh)"/>
<rect x="8.5" y="17.4" width="2.9" height="7" fill="#0a32c8"/>
</g>
<g id="folder">
<path d="M1 20.5V3.6Q1 1.8 2.8 1.8H6.6L8.2 3.8H23.8Q25.6 3.8 25.6 5.6V9" fill="url(#fb)" stroke="#0a32c8" stroke-width="1.1"/>
</g>
<g id="folderfront">
<path d="M4.8 8.8H27.6Q29.3 8.8 28.8 10.4L25.4 21.6Q24.9 23.2 23.2 23.2H2.2Q0.4 23.2 0.9 21.6L4 9.8Q4.2 8.8 4.8 8.8Z" fill="url(#fo)" stroke="#0a32c8" stroke-width="1.2"/>
</g>
</defs>
<!-- 1 new -->
<path d="M9.5 6.5H26.3L30.7 10.6V35.5H9.5Z" fill="#fff" stroke="#0a32c8" stroke-width="1.1"/>
<path d="M26 6.2L31 10.6H26Z" fill="#0a32c8"/>
<rect x="12.3" y="12.3" width="16" height="20" fill="url(#fab)"/>
<!-- 2 open -->
<g transform="translate(50 10.5)"><use href="#folder"/></g>
<rect x="56.5" y="6.4" width="15.5" height="13" fill="url(#fab)"/>
<g transform="translate(50 10.7)"><use href="#folderfront"/></g>
<!-- 3 recent -->
<g transform="translate(94 14.4)"><use href="#folder"/></g>
<circle cx="107.2" cy="15.4" r="10" fill="#fff" stroke="#0a40b8" stroke-width="2"/>
<g fill="#000"><circle cx="107.3" cy="9.4" r="0.8"/><circle cx="101" cy="16.4" r="0.8"/><circle cx="113.4" cy="16.4" r="0.8"/></g>
<path d="M104.8 12.6L107.3 16.2L109.2 11.6" stroke="#000" stroke-width="1.1" fill="none"/><path d="M107.3 16.2L108.6 20" stroke="#f0501e" stroke-width="1"/>
<g transform="translate(94 11.8)"><use href="#folderfront"/></g>
<!-- 4 save -->
<g transform="translate(139.2 8.2)"><use href="#floppy"/></g>
<!-- 5 save as -->
<g transform="translate(183.3 7.2)"><use href="#floppy"/></g>
<path d="M191.4 12.2L206.6 36" stroke="#0a0a86" stroke-width="3" stroke-linecap="round"/><path d="M191 11.6L192.6 14.2" stroke="#101060" stroke-width="1.6"/><circle cx="193.4" cy="15.6" r="0.9" fill="#f6d9b0"/>
<!-- 6 save web -->
<circle cx="244.1" cy="17.4" r="10.5" fill="url(#gl)"/>
<g fill="none" stroke="#e8fbff" stroke-width="0.9" opacity="0.75"><path d="M238.5 12.5Q243 9.5 248.5 11.5M237.5 16Q244 13 251 15.5M239 19.5Q245 17 250.5 19M243.8 9.5Q241.5 15 244.5 21M247.5 10.5Q249.5 15 247.5 20"/></g>
<g transform="translate(226.2 18.2) scale(0.745 0.69)"><use href="#floppy"/></g>
<!-- 7 save texture -->
<rect x="274.2" y="7.6" width="23.6" height="24.2" fill="url(#chk)"/>
<g transform="translate(271.2 17.4) scale(0.75 0.68)"><use href="#floppy"/></g>
<!-- 8 export -->
<path d="M316.4 8.8L326 10.4L336.8 11.2L336.8 32.4L327 29.6L317.2 28Z" fill="url(#grd)" opacity="0.92"/>
<path d="M314.6 20.6C311 28 314 34 319.6 34C325 33.6 328 30 329.2 27.2L332.2 28.6L328.2 21.6L321.2 24.4L324 25.6C322.4 28.8 319.6 30.6 317.2 29.6C314.4 28.4 313.6 24.4 314.6 20.6Z" fill="#0a56c8"/>
<!-- 9 print -->
<path d="M357.8 19V8.4H369L372.2 11.4V19Z" fill="#fff"/><path d="M369 8.4L372.2 11.4H369Z" fill="#cfe4f8"/>
<rect x="357" y="14.4" width="1.4" height="4" fill="#0a32b0"/><rect x="371.6" y="14.4" width="1.4" height="4" fill="#0a32b0"/>
<path d="M353 18.4H356.6L357.4 20.4H372.6L373.4 18.4H377Q378.6 18.4 378.6 20V29.4Q378.6 31 377 31H353Q351.4 31 351.4 29.4V20Q351.4 18.4 353 18.4Z" fill="url(#pr)"/>
<path d="M357 18.6H373V21.4H357Z" fill="#d8d8d8"/>
<circle cx="354.4" cy="25.6" r="0.8" fill="#f8a020"/>
<path d="M357.6 27.6H372.4L375 33.4H355Z" fill="#0a0a0a"/><path d="M358.6 29.2H371.4L373 32.2H357Z" fill="#fff"/>
</svg>

<svg class="abs" style="left:1294px;top:2px" width="32" height="32" viewBox="0 0 32 32"><rect width="32" height="32" fill="#000"/>
<g stroke="#fff" stroke-width="3" stroke-linecap="round"><path d="M10 8H27M10 16H27M10 24H27"/></g>
<circle cx="4" cy="8" r="1.6" fill="#fff"/><circle cx="4" cy="16" r="1.6" fill="#fff"/><circle cx="4" cy="24" r="1.6" fill="#fff"/></svg>
</div>
  <div id="band"></div>
  <svg id="topb" width="1358" height="49"><rect width="1358" height="49" fill="url(#bp)"/></svg>
  <div id="main">
    <div class="vl" style="left:33px"></div>
    <div class="vl" style="left:321px"></div>
    <div class="vl" style="left:357px"></div>
    <div class="abs" style="left:359px;top:86px;width:2px;height:1px;background:#666"></div>
    <svg class="abs" style="left:0;top:0" width="1358" height="479" viewBox="0 166 1358 479" font-family="Liberation Sans, sans-serif" fill="#111">
      <text transform="translate(24.5 491.4) rotate(-90)" font-size="19.5" textLength="190" lengthAdjust="spacingAndGlyphs">CROSS BORDER</text>
      <text transform="translate(348.6 491.4) rotate(-90)" font-size="19.5" textLength="190" lengthAdjust="spacingAndGlyphs">CROSS BORDER</text>
      <text x="124.6" y="397.2" font-size="24.4" textLength="108.6" lengthAdjust="spacingAndGlyphs">PALLU</text>
      <text x="798.4" y="358" font-size="18.6" textLength="69" lengthAdjust="spacingAndGlyphs">BODY</text>
    </svg>
  </div>
  <svg id="bodyb" width="1000" height="89" viewBox="0 -1 1000 89"><rect y="-1" width="1000" height="1" fill="#555"/><rect width="1000" height="88" fill="url(#pp)"/></svg>
  <svg id="botb" width="1358" height="49" viewBox="0 0 1358 49"><rect width="1358" height="49" fill="url(#bp)"/></svg>
  <div class="abs" style="left:0;top:645px;width:358px;height:1px;background:#555"></div>
  <div id="under"></div>
  <div id="hscroll"><div class="btn" style="left:0;border-right:1px solid #9a9a9a"><svg class="abs" style="left:1px;top:1px" width="5" height="8" viewBox="0 0 5 8"><path d="M4.4 0.4L0.6 4L4.4 7.6Z" fill="#3c3c3c"/></svg></div><div class="thumb"></div><div class="btn" style="left:1349px;width:9px;border-left:1px solid #9a9a9a"><svg class="abs" style="left:2px;top:1px" width="5" height="8" viewBox="0 0 5 8"><path d="M0.6 0.4L4.4 4L0.6 7.6Z" fill="#3c3c3c"/></svg></div></div>
  <div id="wbot"></div><div id="wbot2"></div>
</div>
<div id="strip">
<div class="abs" style="left:0;top:0;width:7px;height:46px;background:linear-gradient(90deg,#cfcfcf,#e6e6e6 50%,#ebebeb)"></div>
<div class="abs" style="left:-4px;top:28px;width:7.4px;height:12px;border-radius:50%;background:#0f6fcf"></div>
<div class="abs" style="left:0;top:46px;width:7px;height:1px;background:#cdcdcd"></div>
<div class="abs" style="left:0;top:47px;width:7px;height:17px;background:linear-gradient(90deg,#d2d2d2,#e6e6e6 50%,#e9e9e9)"></div>
<svg class="abs" style="left:0;top:54px" width="5" height="6" viewBox="0 0 5 6"><path d="M0 5L2 0.6L4.4 5" fill="none" stroke="#444" stroke-width="1.3"/></svg>
<div class="abs" style="left:0;top:64px;width:6px;height:493px;background:linear-gradient(90deg,#a9a9a9,#b8b8b8 40%,#bdbdbd)"></div>
<div class="abs" style="left:6px;top:64px;width:1px;height:493px;background:#d6d6d6"></div>
<div class="abs" style="left:0;top:557px;width:7px;height:136px;background:linear-gradient(90deg,#cfcfcf,#e2e2e2 50%,#e6e6e6)"></div>
<svg class="abs" style="left:0;top:673px" width="5" height="6" viewBox="0 0 5 6"><path d="M0 1L2 5.4L4.4 1" fill="none" stroke="#444" stroke-width="1.3"/></svg>
<div class="abs" style="left:0;top:693px;width:7px;height:9px;background:linear-gradient(90deg,#cfcfcf,#e0e0e0 50%,#e2e2e2)"></div>
<div class="abs" style="left:0;top:702px;width:7px;height:1px;background:#c8c8c8"></div>
<div class="abs" style="left:0;top:703px;width:7px;height:25px;background:linear-gradient(90deg,#d6d6d6,#e6e6e6 40%,#e9e9e9 80%,#d0d0d0 90%)"></div>
<div class="abs" style="left:-5px;top:709px;width:8px;height:14px;border-radius:50%;border:1px solid #555"></div>
</div>
<div id="edge"></div>
<div id="task">
<svg class="abs" style="left:16px;top:12px" width="16" height="16" viewBox="0 0 16 16"><path d="M0 2.3L6.5 1.4V7.6H0ZM7.3 1.3L16 0V7.6H7.3ZM0 8.4H6.5V14.6L0 13.7ZM7.3 8.4H16V16L7.3 14.7Z" fill="#fff"/></svg>
<div id="search"><svg class="abs" style="left:8px;top:8px" width="24" height="24" viewBox="0 0 24 24"><circle cx="12" cy="11.6" r="9.6" fill="none" stroke="#b9b9b9" stroke-width="1.2"/><circle cx="12" cy="11.6" r="8.6" fill="none" stroke="#0c0c0c" stroke-width="2.6"/></svg>
<span class="st">Type here to search</span>
<svg class="abs" style="left:317px;top:11px" width="14" height="18" viewBox="0 0 14 18"><rect x="4.2" y="0.8" width="5.6" height="10" rx="2.8" fill="none" stroke="#2a2a2a" stroke-width="1.2"/><path d="M1.6 8V9.2Q1.6 13.4 7 13.4Q12.4 13.4 12.4 9.2V8M7 13.4V16.4M4 16.6H10" fill="none" stroke="#2a2a2a" stroke-width="1.1"/></svg>
</div>
<!-- task view -->
<svg class="abs" style="left:406px;top:11px" width="20" height="17" viewBox="0 0 20 17"><g fill="none" stroke="#fff" stroke-width="1.2"><path d="M1.4 0.8V3.4H12.6V0.8M1.4 16.2V13.6H12.6V16.2"/><rect x="2.2" y="5.4" width="9.6" height="6.2"/><path d="M16.2 0.8V3.2M16.2 13.8V16.2"/></g><rect x="15" y="5.2" width="2.6" height="2.4" fill="#fff"/><rect x="15.6" y="7.6" width="1.3" height="4.2" fill="#fff"/></svg>
<!-- edge -->
<svg class="abs" style="left:456px;top:9px" width="22" height="22" viewBox="0 0 22 22"><path d="M1.2 10.2C1.8 4.6 6 0.6 11.6 0.6C17.6 0.6 21 5 21 10.4V12.8H7.6C7.8 16.2 10.6 17.8 13.8 17.8C16.2 17.8 18.2 17 20 16V20C18 21 15.8 21.6 13 21.6C7 21.6 3.2 17.8 3.2 12.6C3.2 9.4 4.8 6.8 7.4 5.2C4.4 5.8 2.4 7.8 1.2 10.2ZM7.8 9H15.2C15.2 6.4 13.8 4.8 11.4 4.8C9.4 4.8 8 6.4 7.8 9Z" fill="#0a78d6"/></svg>
<!-- chrome -->
<svg class="abs" style="left:504px;top:9px" width="23" height="23" viewBox="-11.5 -11.5 23 23"><circle r="11" fill="#db4437"/><path d="M0 0L-9.53 -5.5A11 11 0 0 0 -1.9 10.83Z" fill="#0f9d58"/><path d="M0 0L-1.9 10.83A11 11 0 0 0 9.53 -5.5H0Z" fill="#ffcd40"/><path d="M-9.53 -5.5A11 11 0 0 1 9.53 -5.5H0Z" fill="#db4437"/><circle r="5" fill="#fff"/><circle r="4" fill="#4285f4"/></svg>
<!-- explorer -->
<svg class="abs" style="left:553px;top:10px" width="23" height="19" viewBox="0 0 23 19"><path d="M0.6 2Q0.6 0.8 1.8 0.8H8.6L10.2 2.6H21.2Q22.4 2.6 22.4 3.8V17.6H0.6Z" fill="#f5c84c"/><rect x="0.6" y="3.8" width="21.8" height="13.8" fill="#ffe594"/><rect x="2.4" y="1.6" width="1.4" height="1" fill="#fff"/><path d="M4.4 17.6V11.4Q4.4 10.6 5.2 10.6H17.8Q18.6 10.6 18.6 11.4V17.6H14.6V14.2H8.4V17.6Z" fill="#35a8ea"/></svg>
<!-- cmd -->
<svg class="abs" style="left:602px;top:10px" width="23" height="19" viewBox="0 0 23 19" font-family="Liberation Mono, monospace"><rect x="0.5" y="0.5" width="22" height="18" fill="#000" stroke="#9a9a9a" stroke-width="1"/><rect x="1" y="1" width="21" height="2.2" fill="#d8d8d8"/><text x="2.4" y="9.8" font-size="6.4" fill="#fff" font-weight="bold">C:\_</text></svg>
<!-- paisley red -->
<svg class="abs" style="left:650px;top:10px" width="26" height="20" viewBox="0 0 26 20"><path d="M5.4 11.8C5.4 7.8 9.6 4.6 15 5C19 5.4 21 7 21 8.4C21 9.6 19.4 9.6 17.8 9.2C15 8.4 13.4 9.8 12.4 12C11.2 14.4 9.4 15.4 7.6 14.8C6 14.2 5.4 13.2 5.4 11.8Z" fill="#14147e" stroke="#e01414" stroke-width="1.3"/><g fill="none" stroke="#e01414" stroke-width="1.1"><path d="M3.6 10.4a1.3 1.3 0 1 0 -1.6 -1.2M5 6.8a1.3 1.3 0 1 0 -1.8 -0.8M8 4a1.3 1.3 0 1 0 -1.8 -0.4M12 2.6a1.3 1.3 0 1 0 -1.6 0.2M16.6 2.8a1.3 1.3 0 1 0 -1.8 0.4M21 4.4a1.3 1.3 0 1 0 -1.6 0.8M23.4 7.6a1.3 1.3 0 1 0 -1.2 1.4M22.4 11.8a1.3 1.3 0 1 0 -1.8 -1M18 12.6a1.3 1.3 0 1 0 -1.8 -0.6M15 15.8a1.3 1.3 0 1 0 -1.6 -1M11.6 18a1.3 1.3 0 1 0 -1.6 -1.2M7 18.4a1.3 1.3 0 1 0 -1 -1.6M3.6 15.6a1.3 1.3 0 1 0 0 -2"/></g></svg>
<!-- paint -->
<svg class="abs" style="left:699px;top:8px" width="26" height="24" viewBox="0 0 26 24"><path d="M12.6 5.4C6 5.4 1 9.8 1 14.4C1 17.2 3 18.4 5 17.8C7 17.2 8.2 18 8.4 19.6C8.6 21.6 11.4 22.2 14.4 21.6C19.6 20.6 22.6 16.6 22.6 12.6C22.6 8.2 18.4 5.4 12.6 5.4Z" fill="#cfe2f4" stroke="#8fb2d6" stroke-width="0.8"/><circle cx="5.4" cy="12.6" r="1.9" fill="#e0342c"/><circle cx="9" cy="8.8" r="1.9" fill="#58b848"/><circle cx="14" cy="7.6" r="1.9" fill="#f2b630"/><circle cx="11" cy="14.8" r="1.4" fill="#2c3c5c"/><path d="M13.2 22.6L14.4 23.2L22.8 6.6L21.4 5.8Z" fill="#e88c2c"/><path d="M21.2 6L23 6.8L25.4 2.4L24.6 0.6L22.6 1.4Z" fill="#f0d8b0"/></svg>
<!-- digibunai active -->
<div class="abs" style="left:737px;top:0;width:48px;height:40px;background:linear-gradient(#5c5c5c,#4c4c4c)"></div>
<svg class="abs" style="left:748px;top:7px" width="26" height="26" viewBox="0 0 20 20"><g stroke="#e07a22" stroke-width="1.7" stroke-linecap="round"><path d="M2.2 5.6H17.4M1.4 9.8H18.2M2.2 14H17.4"/></g><g stroke="#262626" stroke-width="1.9" stroke-linecap="round"><path d="M6 1.8L6.2 18M10 1.2L10 18.6M13.8 1.8L13.8 18"/></g><g stroke="#e07a22" stroke-width="1.7"><path d="M8.2 5.6h3.6M4.2 9.8h3.6M12 9.8h3.6M8.2 14h3.6"/></g></svg>
<!-- underlines -->
<div class="ul" style="left:447px;width:40px"></div>
<div class="ul" style="left:594px;width:31px"></div><div class="ul" style="left:626px;width:8px;background:#5a98cc"></div>
<div class="ul" style="left:643px;width:40px"></div>
<div class="ul" style="left:692px;width:40px"></div>
<div class="ul" style="left:737px;width:48px"></div>
<!-- tray -->
<span class="tt" style="left:982px;top:15px;font-size:12px">Connecting...</span>
<svg class="abs" style="left:1079px;top:11px" width="16" height="17" viewBox="0 0 16 17"><g fill="none" stroke="#fff" stroke-width="1.1"><circle cx="10.6" cy="3.6" r="2.6"/><path d="M6.6 9.4C7.4 7.4 8.8 6.6 10.6 6.6C12.8 6.6 14.6 8 15 10.2"/><circle cx="5.2" cy="8.8" r="2.5"/><path d="M0.8 16C1 13 2.8 11.6 5.2 11.6C7.6 11.6 9.4 13 9.6 16"/></g></svg>
<svg class="abs" style="left:1116px;top:15px" width="14" height="9" viewBox="0 0 14 9"><path d="M1 7.6L7 1.4L13 7.6" fill="none" stroke="#fff" stroke-width="1.3"/></svg>
<svg class="abs" style="left:1138px;top:12px" width="18" height="14" viewBox="0 0 18 14"><rect x="4.6" y="3.2" width="11.4" height="7.6" fill="none" stroke="#fff" stroke-width="1.1"/><rect x="16.4" y="5.4" width="1.2" height="3.2" fill="#fff"/><rect x="6" y="4.6" width="8.6" height="4.8" fill="#fff"/><path d="M2 0.8V3M4.2 0.8V3M1 3H5.2V5.4Q5.2 7 3.1 7Q1 7 1 5.4ZM3.1 7V9.4Q3.1 10.6 4.6 10.6" fill="none" stroke="#fff" stroke-width="1"/><path d="M1 3H5.2V5.4Q5.2 7 3.1 7Q1 7 1 5.4Z" fill="#292929"/></svg>
<svg class="abs" style="left:1161px;top:11px" width="20" height="17" viewBox="0 0 20 17"><path d="M2.6 0.8V5.2M0.6 1.8L4.6 4.2M4.6 1.8L0.6 4.2" stroke="#fff" stroke-width="0.9"/><g fill="none" stroke="#8a8a8a" stroke-width="1.2"><path d="M5.4 15.4A10.6 10.6 0 0 1 16.4 4.4"/><path d="M8.6 15.6A7.6 7.6 0 0 1 16.6 7.6"/><path d="M11.8 15.8A4.6 4.6 0 0 1 16.8 10.8"/></g><circle cx="15.6" cy="14.8" r="1.3" fill="#9a9a9a"/></svg>
<svg class="abs" style="left:1186px;top:12px" width="19" height="15" viewBox="0 0 19 15"><path d="M0.8 5H3.6L7.2 1.4V13.6L3.6 10H0.8Z" fill="none" stroke="#fff" stroke-width="1.1"/><g fill="none" stroke-width="1"><path d="M9.4 4.8Q11 7.5 9.4 10.2" stroke="#c8c8c8"/><path d="M11.8 3Q14.4 7.5 11.8 12" stroke="#8a8a8a"/><path d="M14.2 1.2Q18 7.5 14.2 13.8" stroke="#6a6a6a"/></g></svg>
<span class="tt" style="left:1213px;top:12px;font-size:11.8px;letter-spacing:-1px">ENG</span>
<span class="tt" style="left:1248px;top:4px;width:60px;text-align:center;font-size:11.3px;letter-spacing:-0.45px">16:39</span>
<span class="tt" style="left:1243px;top:22px;width:70px;text-align:center;font-size:11.3px">03-04-2019</span>
<svg class="abs" style="left:1324px;top:12px" width="18" height="16" viewBox="0 0 18 16"><path d="M1 0.8H16.6V11.4H11L8.8 13.8L6.6 11.4H1Z" fill="none" stroke="#fff" stroke-width="1.2"/></svg>
<div class="abs" style="left:1361px;top:0;width:1px;height:40px;background:#7a7a7a"></div>
</div>

</body>
</html>
